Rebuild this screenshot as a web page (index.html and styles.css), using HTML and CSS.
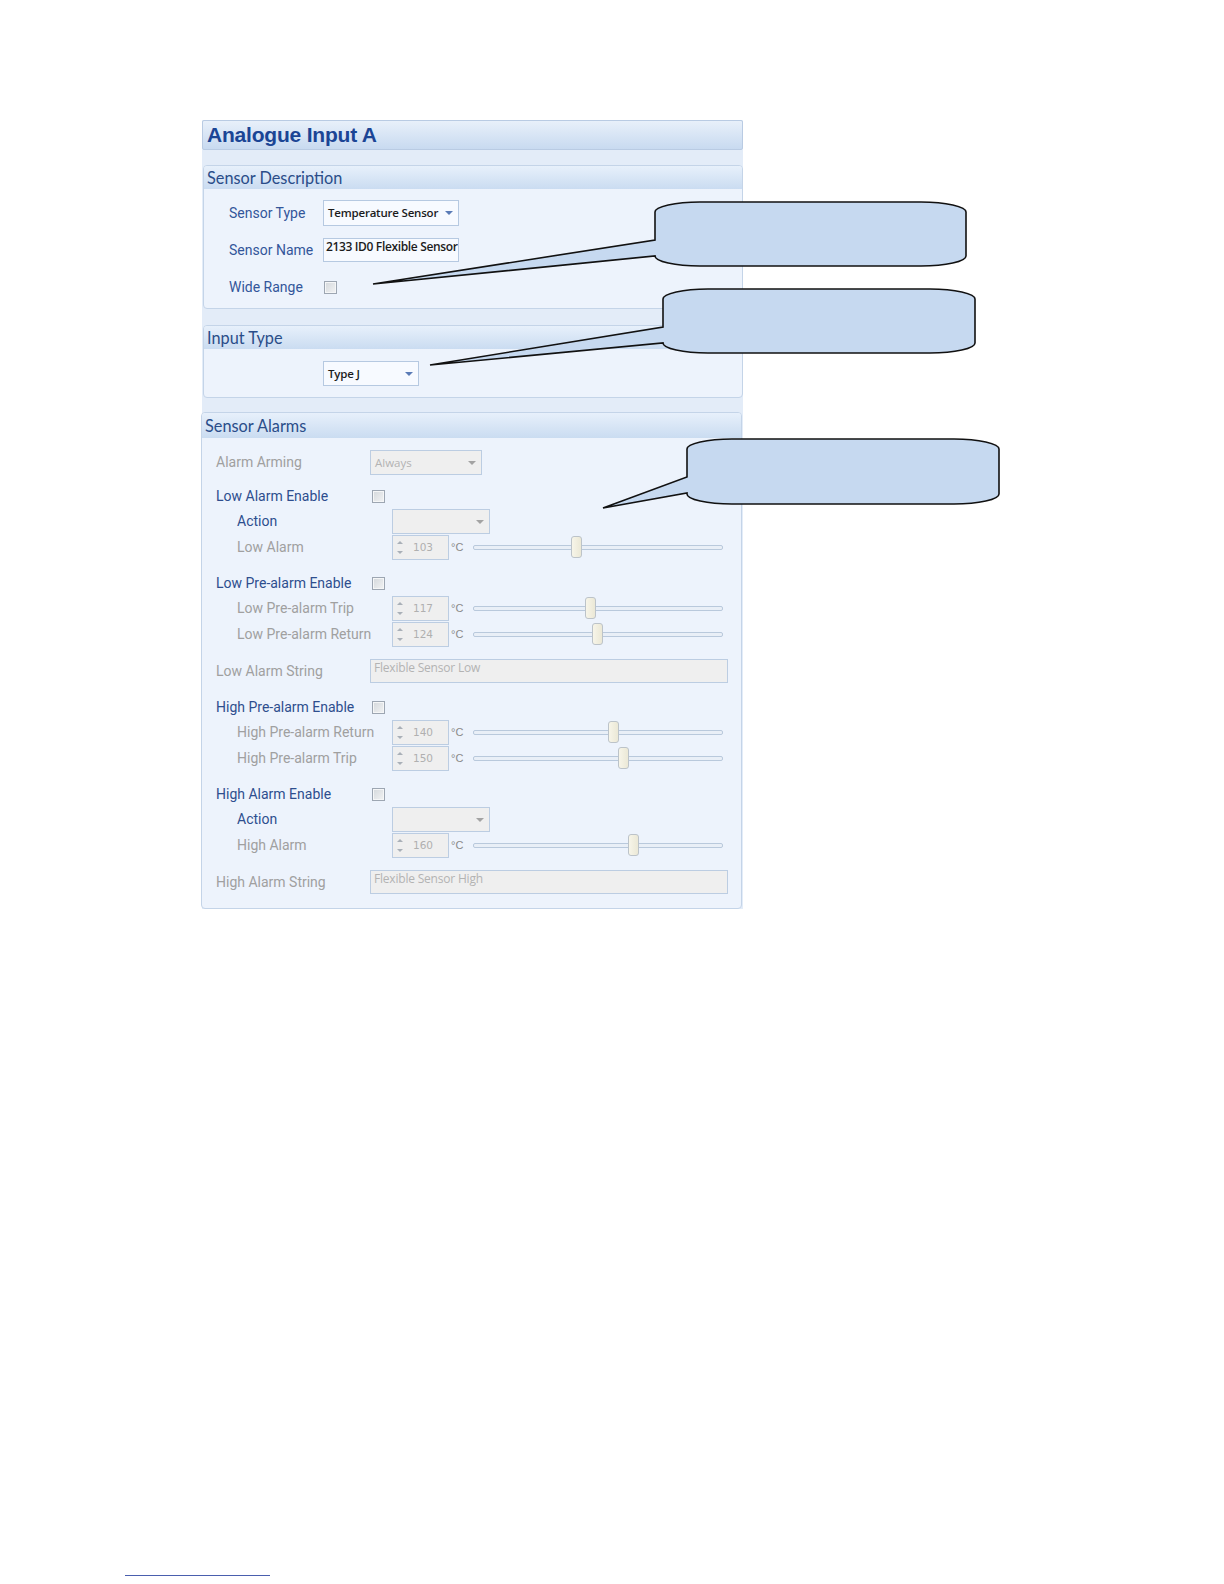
FILE: index.html
```html
<!DOCTYPE html>
<html>
<head>
<meta charset="utf-8">
<title>Analogue Input A</title>
<link rel="stylesheet" href="styles.css">
</head>
<body>
<div class="page">
  <div class="content">
    <div class="panel">
      <div class="titlebar">Analogue Input A</div>

      <div class="group g1">
        <div class="ghead">Sensor Description</div>
        <div class="gbody desc">
          <div class="drow h26">
            <span class="dlab">Sensor Type</span>
            <div class="dd en w136">Temperature Sensor<span class="arr"></span></div>
          </div>
          <div class="drow h24 mt12">
            <span class="dlab">Sensor Name</span>
            <div class="tb en w136">2133 ID0 Flexible Sensor</div>
          </div>
          <div class="drow h24 mt13">
            <span class="dlab">Wide Range</span>
            <span class="cb cb-desc"></span>
          </div>
        </div>
      </div>

      <div class="group g2">
        <div class="ghead">Input Type</div>
        <div class="gbody itype">
          <div class="dd en w96">Type J<span class="arr"></span></div>
        </div>
      </div>

      <div class="group g3">
        <div class="ghead">Sensor Alarms</div>
        <div class="gbody alarms">
          <div class="arow r">
            <span class="alab dis">Alarm Arming</span>
            <div class="actl"><div class="dd dis w112">Always<span class="arr"></span></div></div>
          </div>

          <div class="arow en-row mt9">
            <span class="alab on">Low Alarm Enable</span>
            <div class="actl"><span class="cb"></span></div>
          </div>
          <div class="arow r sub">
            <span class="alab on">Action</span>
            <div class="actl"><div class="dd dis w98"><span class="arr"></span></div></div>
          </div>
          <div class="arow r sub">
            <span class="alab dis">Low Alarm</span>
            <div class="actl">
              <div class="spin"><span class="spa"><i class="up"></i><i class="dn"></i></span>103</div>
              <span class="unit">°C</span>
              <div class="track"><span class="thumb" style="left:97px"></span></div>
            </div>
          </div>

          <div class="arow en-row mt11">
            <span class="alab on">Low Pre-alarm Enable</span>
            <div class="actl"><span class="cb"></span></div>
          </div>
          <div class="arow r sub">
            <span class="alab dis">Low Pre-alarm Trip</span>
            <div class="actl">
              <div class="spin"><span class="spa"><i class="up"></i><i class="dn"></i></span>117</div>
              <span class="unit">°C</span>
              <div class="track"><span class="thumb" style="left:111px"></span></div>
            </div>
          </div>
          <div class="arow r sub">
            <span class="alab dis">Low Pre-alarm Return</span>
            <div class="actl">
              <div class="spin"><span class="spa"><i class="up"></i><i class="dn"></i></span>124</div>
              <span class="unit">°C</span>
              <div class="track"><span class="thumb" style="left:118px"></span></div>
            </div>
          </div>

          <div class="arow r mt11">
            <span class="alab dis">Low Alarm String</span>
            <div class="actl"><div class="tb dis w358">Flexible Sensor Low</div></div>
          </div>

          <div class="arow en-row mt11">
            <span class="alab on">High Pre-alarm Enable</span>
            <div class="actl"><span class="cb"></span></div>
          </div>
          <div class="arow r sub">
            <span class="alab dis">High Pre-alarm Return</span>
            <div class="actl">
              <div class="spin"><span class="spa"><i class="up"></i><i class="dn"></i></span>140</div>
              <span class="unit">°C</span>
              <div class="track"><span class="thumb" style="left:134px"></span></div>
            </div>
          </div>
          <div class="arow r sub">
            <span class="alab dis">High Pre-alarm Trip</span>
            <div class="actl">
              <div class="spin"><span class="spa"><i class="up"></i><i class="dn"></i></span>150</div>
              <span class="unit">°C</span>
              <div class="track"><span class="thumb" style="left:144px"></span></div>
            </div>
          </div>

          <div class="arow en-row mt11">
            <span class="alab on">High Alarm Enable</span>
            <div class="actl"><span class="cb"></span></div>
          </div>
          <div class="arow r sub">
            <span class="alab on">Action</span>
            <div class="actl"><div class="dd dis w98"><span class="arr"></span></div></div>
          </div>
          <div class="arow r sub">
            <span class="alab dis">High Alarm</span>
            <div class="actl">
              <div class="spin"><span class="spa"><i class="up"></i><i class="dn"></i></span>160</div>
              <span class="unit">°C</span>
              <div class="track"><span class="thumb" style="left:154px"></span></div>
            </div>
          </div>

          <div class="arow r mt11">
            <span class="alab dis">High Alarm String</span>
            <div class="actl"><div class="tb dis w358">Flexible Sensor High</div></div>
          </div>
        </div>
      </div>
    </div>
  </div>

  <div class="footrule"></div>

  <svg class="callouts" width="1224" height="1584" viewBox="0 0 1224 1584" xmlns="http://www.w3.org/2000/svg">
    <path d="M700,202 H921 A45,10 0 0 1 966,212 V256 A45,10 0 0 1 921,266 H700 A45,10 0 0 1 655,256 L373,284 L655,240 V212 A45,10 0 0 1 700,202 Z"/>
    <path d="M708,289 H930 A45,10 0 0 1 975,299 V343 A45,10 0 0 1 930,353 H708 A45,10 0 0 1 663,343 L430,365 L663,327 V299 A45,10 0 0 1 708,289 Z"/>
    <path d="M732,439 H954 A45,10 0 0 1 999,449 V494 A45,10 0 0 1 954,504 H732 A45,10 0 0 1 687,494 V493 L603,508 L687,477 V449 A45,10 0 0 1 732,439 Z"/>
  </svg>
</div>
</body>
</html>
```

FILE: styles.css
```css
html, body {
  margin: 0;
  padding: 0;
  background: #ffffff;
}

.page {
  position: relative;
  width: 1224px;
  height: 1584px;
  font-family: "Liberation Sans", Arial, sans-serif;
  overflow: hidden;
}

.content {
  padding: 120px 0 0 202px;
}

.panel {
  width: 541px;
  background: #e3ecf8;
}

.titlebar {
  box-sizing: border-box;
  height: 30px;
  border: 1px solid #b9cbe3;
  border-radius: 2px;
  background: linear-gradient(#e8f0fa, #c8daf0);
  font-weight: bold;
  font-size: 21px;
  line-height: 28px;
  color: #1b4595;
  padding-left: 4px;
  letter-spacing: -0.2px;
}

.group {
  box-sizing: border-box;
  border: 1px solid #c4d4e8;
  border-radius: 4px;
  background: #edf3fc;
  overflow: hidden;
}

.g1 {
  margin: 15px 0 0 1px;
  width: 540px;
}

.g2 {
  margin: 16px 0 0 1px;
  width: 540px;
}

.g3 {
  margin: 14px 0 0 -1px;
  width: 541px;
}

.ghead {
  height: 23px;
  background: linear-gradient(#e7f0fb, #cadcf1);
  font-family: Lato, "Liberation Sans", sans-serif;
  font-size: 16.3px;
  line-height: 23px;
  color: #2a4d89;
  padding-left: 3px;
}

.g3 .ghead {
  height: 25px;
  line-height: 25px;
}

/* sensor description */
.desc {
  padding: 11px 0 9px 25px;
}

.drow {
  display: flex;
  align-items: center;
}

.h26 { height: 26px; }
.h24 { height: 24px; }
.mt12 { margin-top: 12px; }
.mt13 { margin-top: 13px; }
.mt9 { margin-top: 9px; }
.mt11 { margin-top: 11px; }

.dlab {
  width: 94px;
  font-family: Roboto, "Liberation Sans", sans-serif;
  font-size: 14px;
  color: #33569a;
}

/* controls */
.dd, .tb {
  position: relative;
  box-sizing: border-box;
  font-family: "Open Sans", "Liberation Sans", sans-serif;
  font-size: 11.5px;
  white-space: nowrap;
  overflow: hidden;
}

.dd {
  height: 26px;
  line-height: 24px;
  padding-left: 4px;
  border: 1px solid #b6c9e1;
}

.tb {
  height: 24px;
  line-height: 15px;
  padding-left: 3px;
  border: 1px solid #b6c9e1;
}

.dd.en, .tb.en {
  background: #f7faff;
  color: #1c1c1c;
  font-weight: 600;
  letter-spacing: -0.2px;
}

.dd.dis, .tb.dis {
  background: #efefef;
  color: #b3b3b3;
  border-color: #bccde2;
}

.tb.dis {
  font-size: 12px;
  letter-spacing: -0.2px;
}

.tb.en {
  padding-left: 2px;
  font-size: 12px;
  letter-spacing: -0.35px;
}

.w136 { width: 136px; }
.w96 { width: 96px; }
.w112 { width: 112px; }
.w98 { width: 98px; }
.w358 { width: 358px; }

.arr {
  position: absolute;
  right: 5px;
  top: 10px;
  width: 0;
  height: 0;
  border-left: 4px solid transparent;
  border-right: 4px solid transparent;
  border-top: 4px solid #5a7bb6;
}

.dd.dis .arr {
  border-top-color: #a3a3a3;
}

.cb {
  display: inline-block;
  box-sizing: border-box;
  width: 13px;
  height: 13px;
  border: 1px solid #9da6b2;
  background: linear-gradient(135deg, #d4d8dc, #f2f3f4);
  box-shadow: inset 0 0 0 1px #f5f6f7;
}

.cb-desc {
  margin-left: 1px;
}

/* input type */
.itype {
  padding: 12px 0 11px 119px;
}

.itype .dd {
  height: 25px;
  line-height: 23px;
}

/* alarms */
.alarms {
  padding: 11px 0 13px 14px;
}

.arow {
  display: flex;
  align-items: center;
}

.arow.r { height: 26px; }
.arow.en-row { height: 24px; }

.alab {
  box-sizing: border-box;
  width: 154px;
  font-family: Roboto, "Liberation Sans", sans-serif;
  font-size: 14px;
  white-space: nowrap;
}

.alab.on { color: #2e4e8e; }
.alab.dis { color: #a0a0a0; }

.actl {
  display: flex;
  align-items: center;
}

.arow .actl .cb {
  margin-left: 2px;
}

.sub .alab {
  padding-left: 21px;
}

.sub .actl {
  padding-left: 22px;
}

.arow .dd {
  height: 25px;
  line-height: 23px;
}

.spin {
  box-sizing: border-box;
  display: flex;
  align-items: center;
  width: 57px;
  height: 25px;
  border: 1px solid #bccde2;
  background: #efefef;
  font-family: "DejaVu Sans", sans-serif;
  font-size: 10.5px;
  color: #b0b0b0;
}

.spa {
  display: flex;
  flex-direction: column;
  justify-content: space-between;
  width: 7px;
  height: 13px;
  margin: 0 9px 0 4px;
}

.spa i {
  display: block;
  width: 0;
  height: 0;
  border-left: 3px solid transparent;
  border-right: 3px solid transparent;
}

.spa .up { border-bottom: 3px solid #a9b0b8; }
.spa .dn { border-top: 3px solid #a9b0b8; }

.unit {
  width: 22px;
  padding-left: 2px;
  font-family: "Liberation Sans", sans-serif;
  font-size: 11px;
  color: #8a8a8a;
}

.track {
  position: relative;
  box-sizing: border-box;
  width: 250px;
  height: 5px;
  border: 1px solid #b9c9dc;
  border-radius: 2px;
  background: #e9eff7;
}

.thumb {
  position: absolute;
  top: -10px;
  box-sizing: border-box;
  width: 11px;
  height: 22px;
  border: 1px solid #bcc3c9;
  border-radius: 3px;
  background: linear-gradient(90deg, #f7f5e9, #ebe8d6);
}

/* footnote rule */
.footrule {
  position: absolute;
  left: 125px;
  top: 1575px;
  width: 145px;
  height: 1px;
  background: #4a5fae;
}

.callouts {
  position: absolute;
  left: 0;
  top: 0;
  pointer-events: none;
}

.callouts path {
  fill: #c6d9f0;
  stroke: #111111;
  stroke-width: 1.6;
  stroke-linejoin: miter;
}
```
